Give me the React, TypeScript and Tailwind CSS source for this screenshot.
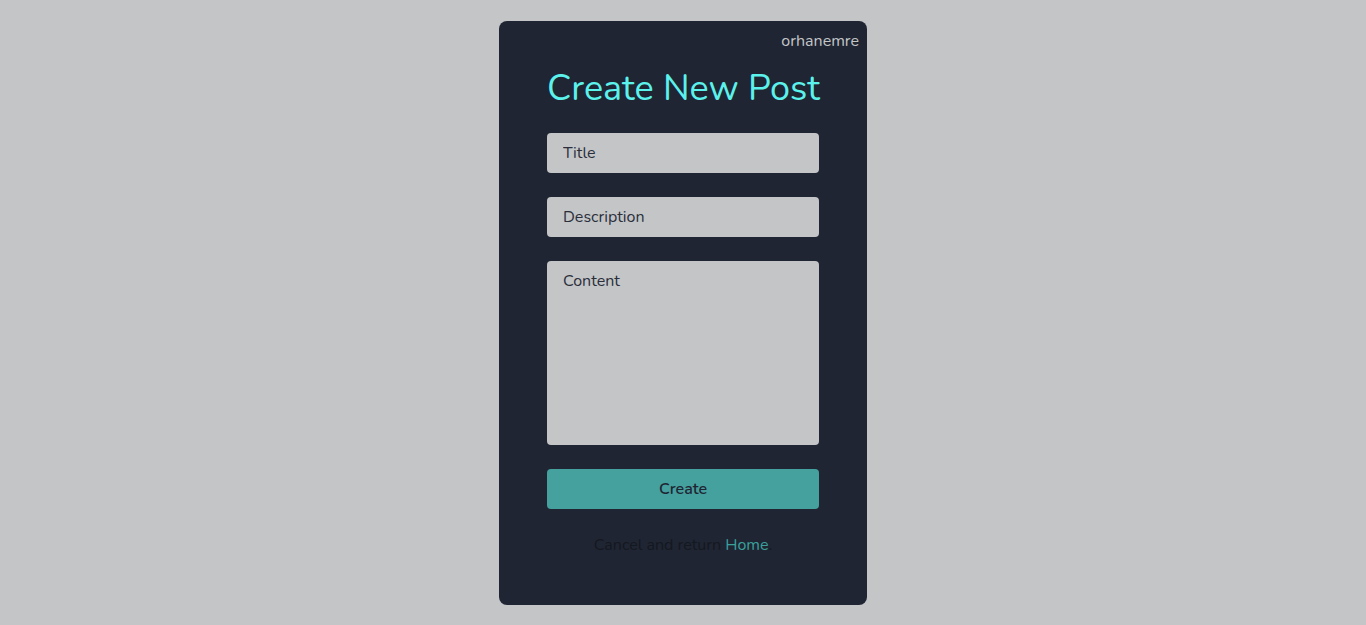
import React from 'react';

const App = () => {
    return (
        <div className="flex min-h-screen items-center justify-center bg-[#c4c5c7] font-['Nunito','Noto_Sans',sans-serif]">
            <div className="flex h-[584px] w-[368px] flex-col rounded-lg bg-[#1f2533] px-2 pt-2">
                <div className="text-right text-base leading-6 text-[#c4c5c7]">orhanemre</div>

                <div className="mx-10 flex flex-col">
                    <h1 className="mt-[13px] mb-[22px] whitespace-nowrap text-center text-[36px] leading-[45px] font-normal text-[#5cf2ec]">
                        Create New Post
                    </h1>

                    <form className="flex flex-col gap-6" onSubmit={(e) => e.preventDefault()}>
                        <input
                            type="text"
                            placeholder="Title"
                            className="h-10 rounded bg-[#c4c5c7] px-4 text-base text-[#1f2533] placeholder:text-[#2a2f3b] outline-none"
                        />
                        <input
                            type="text"
                            placeholder="Description"
                            className="h-10 rounded bg-[#c4c5c7] px-4 text-base text-[#1f2533] placeholder:text-[#2a2f3b] outline-none"
                        />
                        <textarea
                            placeholder="Content"
                            className="h-[184px] resize-none rounded bg-[#c4c5c7] px-4 py-2 text-base text-[#1f2533] placeholder:text-[#2a2f3b] outline-none"
                        />
                        <button
                            type="submit"
                            className="h-10 rounded bg-[#45a19e] text-base font-semibold text-[#1f2533]"
                        >
                            Create
                        </button>
                    </form>

                    <p className="mt-6 text-center text-base leading-6 text-[#14181f]">
                        Cancel and return <a href="#" className="text-[#3aa09c]">Home</a>.
                    </p>
                </div>
            </div>
        </div>
    );
};

export default App;
